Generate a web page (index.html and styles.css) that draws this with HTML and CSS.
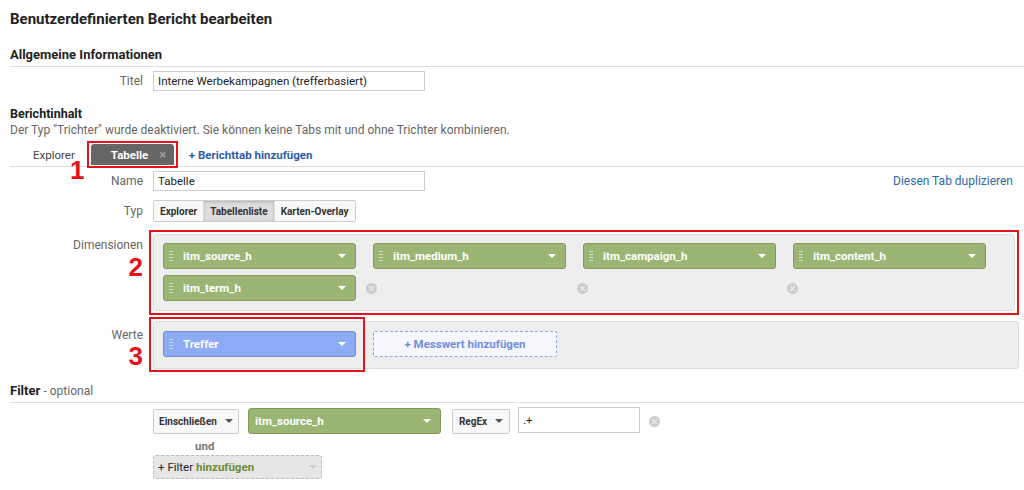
FILE: index.html
```html
<!DOCTYPE html>
<html lang="de">
<head>
  <meta charset="UTF-8" />
  <title>Benutzerdefinierten Bericht bearbeiten</title>
  <link rel="stylesheet" href="styles.css">
</head>
<body>

  <h1 class="page-title">Benutzerdefinierten Bericht bearbeiten</h1>

  <!-- Allgemeine Informationen -->
  <h2 class="section-title ruled">Allgemeine Informationen</h2>
  <div class="row">
    <label class="lbl">Titel</label>
    <input class="text-input" type="text" value="Interne Werbekampagnen (trefferbasiert)" />
  </div>

  <!-- Berichtinhalt -->
  <h2 class="section-title sub">Berichtinhalt</h2>
  <p class="hint">Der Typ "Trichter" wurde deaktiviert. Sie können keine Tabs mit und ohne Trichter kombinieren.</p>

  <div class="tabs">
    <span class="tab-plain">Explorer</span>
    <span class="mark-box tab-mark">
      <span class="tab-active">Tabelle <span class="tab-x">×</span></span>
    </span>
    <a class="add-tab">+ Berichttab hinzufügen</a>
    <span class="num num-1">1</span>
  </div>

  <div class="row">
    <label class="lbl">Name</label>
    <input class="text-input" type="text" value="Tabelle" />
    <a class="dup-link">Diesen Tab duplizieren</a>
  </div>

  <div class="row typ-row">
    <label class="lbl">Typ</label>
    <div class="seg">
      <button>Explorer</button>
      <button class="on">Tabellenliste</button>
      <button>Karten-Overlay</button>
    </div>
  </div>

  <div class="row block-row dim-row">
    <div class="lbl-col">
      <label class="lbl">Dimensionen</label>
      <span class="num">2</span>
    </div>
    <div class="mark-box dim-mark">
      <div class="well dim-grid">
        <div class="chip green"><span class="grip"></span>itm_source_h<span class="caret"></span></div>
        <div class="chip green"><span class="grip"></span>itm_medium_h<span class="caret"></span></div>
        <div class="chip green"><span class="grip"></span>itm_campaign_h<span class="caret"></span></div>
        <div class="chip green"><span class="grip"></span>itm_content_h<span class="caret"></span></div>
        <div class="chip-cell">
          <div class="chip green"><span class="grip"></span>itm_term_h<span class="caret"></span></div>
          <span class="rm"></span>
        </div>
        <div class="chip-cell"></div>
        <div class="chip-cell empty"><span class="rm"></span></div>
        <div class="chip-cell empty"><span class="rm"></span></div>
      </div>
    </div>
  </div>

  <div class="row block-row val-row">
    <div class="lbl-col">
      <label class="lbl">Werte</label>
      <span class="num">3</span>
    </div>
    <div class="well val-well">
      <div class="chip blue"><span class="grip"></span>Treffer<span class="caret"></span></div>
      <div class="add-metric">+ Messwert hinzufügen</div>
      <span class="val-mark"></span>
    </div>
  </div>

  <!-- Filter -->
  <h2 class="section-title ruled filter-title">Filter <span class="opt">- optional</span></h2>
  <div class="filter-row">
    <button class="drop incl">Einschließen <span class="caret dark"></span></button>
    <div class="chip green f-chip">itm_source_h<span class="caret"></span></div>
    <button class="drop regex">RegEx <span class="caret dark"></span></button>
    <input class="text-input f-input" type="text" value=".+" />
    <span class="rm"></span>
  </div>
  <div class="and">und</div>
  <div class="add-filter">+ Filter <b>hinzufügen</b><span class="caret light"></span></div>

</body>
</html>
```

FILE: styles.css
```css
* {
  box-sizing: border-box;
}

body {
  margin: 0;
  padding: 0 0 0 10px;
  font-family: Roboto, "Noto Sans", sans-serif;
  font-size: 12px;
  color: #333;
  background: #fff;
  overflow: hidden;
}

.page-title {
  margin: 10px 0 0;
  font-size: 15px;
  font-weight: bold;
  line-height: 18px;
  color: #222;
}

.section-title {
  margin: 0;
  font-size: 13px;
  font-weight: bold;
  color: #222;
  line-height: 16px;
}

.ruled {
  margin-top: 19px;
  padding-bottom: 3px;
  border-bottom: 1px solid #ddd;
}

.sub {
  margin-top: 15px;
  font-size: 12.5px;
}

.hint {
  margin: 1px 0 0;
  color: #666;
  line-height: 14px;
}

.row {
  display: flex;
  align-items: center;
  margin-top: 4px;
}

.lbl {
  width: 133px;
  margin-right: 10px;
  text-align: right;
  color: #666;
  flex: none;
}

.text-input {
  width: 272px;
  height: 20px;
  border: 1px solid #ccc;
  padding: 0 4px;
  font: inherit;
  font-size: 11.5px;
  color: #222;
}

/* tabs */
.tabs {
  position: relative;
  display: flex;
  align-items: flex-end;
  height: 27px;
  margin-top: 3px;
  border-bottom: 1px solid #ddd;
}

.tab-plain {
  margin: 0 12px 4px 23px;
  font-size: 11.5px;
  color: #444;
}

.mark-box {
  border: 2px solid #e8111a;
  padding: 2px;
}

.tab-mark {
  margin-bottom: -2px;
  padding: 1px 2px 1px;
}

.tab-active {
  display: block;
  width: 83px;
  height: 21px;
  line-height: 21px;
  padding-left: 20px;
  background: #666;
  color: #fff;
  font-weight: bold;
  font-size: 11.5px;
  border-radius: 3px 3px 0 0;
}

.tab-x {
  margin-left: 8px;
  color: #aaa;
  font-weight: normal;
  font-size: 13px;
}

.add-tab {
  margin: 0 0 4px 11px;
  color: #2c5ea8;
  font-weight: bold;
  font-size: 11.5px;
}

.num {
  font-family: "Liberation Sans", Arial, sans-serif;
  font-size: 26px;
  font-weight: bold;
  color: #e8111a;
  line-height: 22px;
}

.num-1 {
  position: absolute;
  left: 60px;
  top: 19px;
}

.dup-link {
  margin-left: auto;
  margin-right: 11px;
  color: #2c6aa8;
}

.typ-row {
  margin-top: 9px;
}

.seg {
  display: flex;
  border: 1px solid #ccc;
  border-radius: 2px;
}

.seg button {
  height: 20px;
  padding: 0 6px;
  border: none;
  border-left: 1px solid #ddd;
  background: #f8f8f8;
  font-family: inherit;
  font-size: 10px;
  font-weight: bold;
  color: #333;
}

.seg button:first-child {
  border-left: none;
}

.seg button.on {
  background: #ddd;
  box-shadow: inset 0 1px 3px rgba(0, 0, 0, 0.2);
}

/* dimension / metric blocks */
.block-row {
  align-items: flex-start;
}

.lbl-col {
  width: 133px;
  margin-right: 6px;
  display: flex;
  flex-direction: column;
  align-items: flex-end;
}

.lbl-col .lbl {
  width: auto;
  margin: 0;
}

.dim-row {
  margin-top: 8px;
}

.dim-row .lbl-col {
  padding-top: 8px;
}

.dim-row .num {
  margin-top: 4px;
}

.dim-mark {
  width: 870px;
  padding: 2px;
}

.well {
  background: #eee;
  border: 1px solid #ddd;
  border-radius: 3px;
}

.dim-grid {
  display: grid;
  grid-template-columns: repeat(4, 193px);
  column-gap: 17px;
  row-gap: 6px;
  padding: 8px 9px 9px;
}

.chip-cell {
  display: flex;
  align-items: center;
  gap: 10px;
}

.chip-cell.empty .rm {
  margin-left: -6px;
}

.chip {
  position: relative;
  display: flex;
  align-items: center;
  width: 193px;
  height: 26px;
  padding: 0 0 0 19px;
  border-radius: 3px;
  color: #fff;
  font-weight: bold;
  font-size: 11.5px;
  flex: none;
}

.green {
  background: #9bb574;
  border: 1px solid #7f9a59;
}

.blue {
  background: #8eabf5;
  border: 1px solid #6e8bd6;
}

.grip {
  position: absolute;
  left: 5px;
  top: 6px;
  width: 4px;
  height: 12px;
  background-image: radial-gradient(circle, rgba(255, 255, 255, 0.55) 0.8px, transparent 1px);
  background-size: 2px 3px;
}

.caret {
  margin-left: auto;
  margin-right: 9px;
  width: 0;
  height: 0;
  border-left: 4px solid transparent;
  border-right: 4px solid transparent;
  border-top: 4px solid #fff;
}

.caret.dark {
  border-top-color: #555;
  margin: 0 0 0 8px;
}

.caret.light {
  border-top-color: #ccc;
}

.rm {
  position: relative;
  display: inline-block;
  width: 11px;
  height: 11px;
  border-radius: 50%;
  background: #ccc;
  flex: none;
}

.rm::before,
.rm::after {
  content: "";
  position: absolute;
  left: 5px;
  top: 2px;
  width: 1.4px;
  height: 7px;
  background: #eee;
  transform: rotate(45deg);
}

.rm::after {
  transform: rotate(-45deg);
}

.val-row {
  margin-top: 6px;
}

.val-row .lbl-col {
  padding-top: 7px;
}

.val-row .num {
  margin-top: 3px;
}

.val-well {
  position: relative;
  display: flex;
  gap: 17px;
  width: 866px;
  height: 48px;
  margin-left: 4px;
  padding: 9px 9px;
}

.add-metric {
  width: 184px;
  height: 26px;
  line-height: 24px;
  text-align: center;
  border: 1px dashed #8ea6e8;
  border-radius: 2px;
  background: #f5f7fd;
  color: #6f8fde;
  font-weight: bold;
  font-size: 11.5px;
}

.val-mark {
  position: absolute;
  left: -5px;
  top: -5px;
  width: 216px;
  height: 55px;
  border: 2px solid #e8111a;
}

/* filter */
.filter-title {
  margin-top: 14px;
}

.opt {
  font-weight: normal;
  color: #666;
  font-size: 12px;
}

.filter-row {
  display: flex;
  align-items: center;
  margin: 5px 0 0 143px;
}

.drop {
  display: flex;
  align-items: center;
  justify-content: center;
  height: 25px;
  padding: 0;
  border: 1px solid #ccc;
  border-radius: 2px;
  background: #f8f8f8;
  font-family: inherit;
  font-size: 10px;
  font-weight: bold;
  color: #333;
}

.incl {
  width: 86px;
  margin-right: 9px;
}

.f-chip {
  padding-left: 6px;
  margin-right: 11px;
}

.regex {
  width: 58px;
  margin-right: 8px;
}

.f-input {
  width: 122px;
  height: 26px;
  margin: -2px 9px 0 0;
}

.and {
  margin: 5px 0 0 185px;
  color: #777;
  font-weight: bold;
  font-size: 11.5px;
}

.add-filter {
  display: flex;
  align-items: center;
  width: 169px;
  height: 24px;
  margin: 2px 0 0 143px;
  padding-left: 4px;
  background: #e6e6e6;
  border: 1px dashed #bbb;
  border-radius: 3px;
  font-size: 11.5px;
  color: #222;
}

.add-filter b {
  margin-left: 3px;
  color: #6b8d3c;
}

.add-filter .caret {
  margin-right: 4px;
}
```
